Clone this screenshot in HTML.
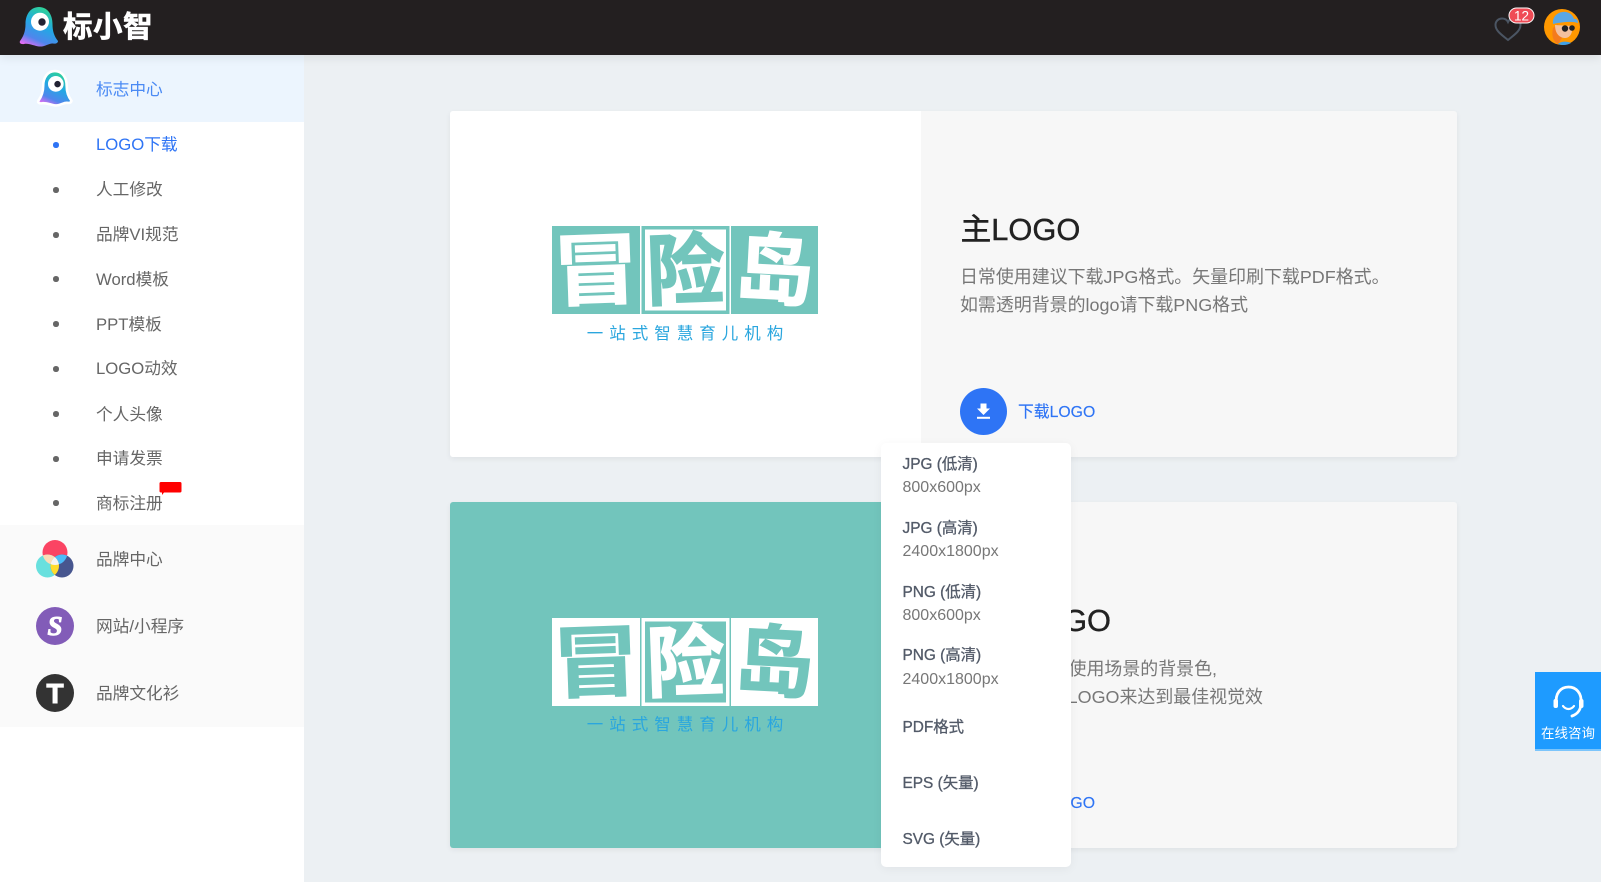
<!DOCTYPE html>
<html lang="zh-CN"><head><meta charset="utf-8"><title>标小智</title>
<style>
html,body{margin:0;padding:0;width:1601px;height:882px;overflow:hidden;background:#ecf0f3;}
body{position:relative;font-family:"Liberation Sans","Noto Sans CJK SC",sans-serif;}
.a{position:absolute;white-space:nowrap;}
.t{position:absolute;white-space:nowrap;line-height:24px;height:24px;}
.nav{left:96px;font-size:16.7px;color:#666;}
.dot{position:absolute;left:53px;width:5.5px;height:5.5px;border-radius:50%;background:#666;}
.m1{left:902.5px;font-size:15.4px;color:#525a68;-webkit-text-stroke:.3px #525a68;}
.m2{left:902.5px;font-size:16px;color:#777;}
.desc{font-size:17.95px;color:#777;}
.ttl{font-size:30.8px;color:#222;line-height:36px;height:36px;-webkit-text-stroke:.4px #222;}
.lnk{font-size:15.8px;color:#2e74f5;-webkit-text-stroke:.15px #2e74f5;}
svg{position:absolute;overflow:visible;}
</style></head><body>

<!-- header -->
<div class="a" style="left:0;top:0;width:1601px;height:55px;background:#231f20;box-shadow:0 3px 9px rgba(0,0,0,.08);z-index:3;"></div>

<!-- sidebar -->
<div class="a" style="left:0;top:55px;width:304px;height:827px;background:#fff;"></div>
<div class="a" style="left:0;top:55px;width:304px;height:67px;background:#ecf5fe;"></div>
<div class="a" style="left:0;top:525px;width:304px;height:202px;background:#fafafa;"></div>

<div class="t nav" style="top:78px;color:#4a8af4;">标志中心</div>
<div class="t nav" style="top:133px;color:#2e74f5;">LOGO下载</div>
<div class="t nav" style="top:178px;">人工修改</div>
<div class="t nav" style="top:223px;">品牌VI规范</div>
<div class="t nav" style="top:268px;">Word模板</div>
<div class="t nav" style="top:312.500px;">PPT模板</div>
<div class="t nav" style="top:357px;">LOGO动效</div>
<div class="t nav" style="top:402.500px;">个人头像</div>
<div class="t nav" style="top:447px;">申请发票</div>
<div class="t nav" style="top:492px;">商标注册</div>
<div class="t nav" style="top:548px;">品牌中心</div>
<div class="t nav" style="top:615px;">网站/小程序</div>
<div class="t nav" style="top:682px;">品牌文化衫</div>

<div class="dot" style="top:142px;background:#2e74f5;"></div>
<div class="dot" style="top:187px;"></div>
<div class="dot" style="top:232px;"></div>
<div class="dot" style="top:276px;"></div>
<div class="dot" style="top:321px;"></div>
<div class="dot" style="top:366px;"></div>
<div class="dot" style="top:411px;"></div>
<div class="dot" style="top:456px;"></div>
<div class="dot" style="top:500px;"></div>

<!-- red flag -->
<svg style="left:0;top:0;z-index:1" width="200" height="510"><path d="M161 482H180a1.500 1.500 0 0 1 1.500 1.500V491a1.500 1.500 0 0 1-1.500 1.500H164L162 495V492.500H161a1.500 1.500 0 0 1-1.500-1.500V483.500A1.500 1.500 0 0 1 161 482Z" fill="#f00"/></svg>

<!-- icons sidebar -->
<svg width="1601" height="882" style="left:0;top:0;z-index:4;pointer-events:none">
<defs>
<linearGradient id="gh" x1="0.7" y1="0" x2="0.25" y2="1"><stop offset="0" stop-color="#30d78f"/><stop offset=".45" stop-color="#22a8e4"/><stop offset=".78" stop-color="#4f86ec"/><stop offset="1" stop-color="#e56cf5"/></linearGradient>
<clipPath id="cr"><circle cx="55" cy="552.500" r="12.500"/></clipPath>
<clipPath id="ct"><circle cx="47.500" cy="566" r="11.500"/></clipPath>
<clipPath id="cn"><circle cx="62" cy="566" r="11.500"/></clipPath>
</defs>
<!-- header ghost -->
<path d="M39 7C47 7 52.500 14 52.500 24C52.500 31 54 36 58 41C58 43 56 44 53 43.500C49 43 45 47 39 46.500C34 46 29 43 24 44C21 44.500 19 43 20 41C23 37 25.500 32 25.500 24C25.500 14 31 7 39 7Z" fill="url(#gh)"/>
<circle cx="40" cy="21.700" r="9" fill="#fff"/><circle cx="42" cy="22" r="3.700" fill="#223"/>
<!-- sidebar ghost -->
<g transform="translate(21 65) scale(.87)">
<path d="M39 7C47 7 52.500 14 52.500 24C52.500 31 54 36 58 41C58 43 56 44 53 43.500C49 43 45 47 39 46.500C34 46 29 43 24 44C21 44.500 19 43 20 41C23 37 25.500 32 25.500 24C25.500 14 31 7 39 7Z" fill="url(#gh)" stroke="#fff" stroke-width="3"/>
<circle cx="40" cy="21.700" r="9" fill="#fff"/><circle cx="42" cy="22" r="3.700" fill="#223"/>
</g>
<!-- brand icon -->
<circle cx="55" cy="552.500" r="12.500" fill="#fb4463"/>
<circle cx="47.500" cy="566" r="11.500" fill="#68e0de"/>
<circle cx="62" cy="566" r="11.500" fill="#47568f"/>
<circle cx="47.500" cy="566" r="11.500" fill="#fcdcb8" clip-path="url(#cr)"/>
<circle cx="62" cy="566" r="11.500" fill="#4cbcf8" clip-path="url(#cr)"/>
<circle cx="62" cy="566" r="11.500" fill="#ffdc2c" clip-path="url(#ct)"/>
<g clip-path="url(#cr)"><circle cx="47.500" cy="566" r="11.500" fill="#f4f4f4" clip-path="url(#cn)"/></g>
<!-- S / T -->
<circle cx="55" cy="626" r="19" fill="#825cb8"/>
<circle cx="55" cy="693" r="19" fill="#333"/>
<text x="55" y="635" text-anchor="middle" font-family="Liberation Serif" font-size="27" font-weight="700" font-style="italic" fill="#fff" stroke="#fff" stroke-width="1">S</text>
<text x="55" y="703" text-anchor="middle" font-family="Liberation Sans" font-size="28" font-weight="700" fill="#fff" stroke="#fff" stroke-width="1">T</text>
<!-- heart -->
<path d="M1508 40C1502 35 1495.500 31 1495.500 25C1495.500 21 1498.500 18.500 1502 18.500C1505 18.500 1507 20 1508 22C1509 20 1511 18.500 1514 18.500C1517.500 18.500 1520.500 21 1520.500 25C1520.500 31 1514 35 1508 40Z" fill="none" stroke="#4b5563" stroke-width="2"/>
<rect x="1509" y="8" width="25" height="15" rx="7.500" fill="#ef4b55" stroke="#fff" stroke-width="1"/>
<text x="1521.500" y="20.300" text-anchor="middle" font-family="Liberation Sans" font-size="13.500" fill="#fff">12</text>
<!-- avatar -->
<circle cx="1562" cy="27" r="18" fill="#ff9800"/>
<path d="M1553 28C1551 37 1554 42 1558 44L1562 38L1558 24Z" fill="#f47b1d"/>
<path d="M1555 25C1555 34 1560 38 1565 38C1570 38 1573 33 1572 26Z" fill="#f3c19f"/>
<path d="M1553 24C1552 15 1560 11 1566 12C1571 13 1573 16 1574 19C1576 18 1578 20 1578 23C1572 21 1562 22 1553 24Z" fill="#5aa7e6"/>
<circle cx="1565" cy="28.500" r="3.200" fill="#222"/><circle cx="1572" cy="28" r="2.800" fill="#222"/>
<path d="M1558 44C1561 41 1567 41 1571 43C1567 45.500 1562 45.500 1558 44Z" fill="#3ea0e8"/>
<!-- headset -->
<path d="M1556.500 705C1554.500 693 1561 687 1568.500 687C1576 687 1582 693 1581 703C1581 709 1578 714 1572 716" fill="none" stroke="#fff" stroke-width="2.800" stroke-linecap="round"/>
<path d="M1563 706C1566 710 1571 710 1574 706" fill="none" stroke="#fff" stroke-width="2.200" stroke-linecap="round"/>
<rect x="1553.500" y="699" width="4.500" height="9" rx="2" fill="#fff"/><rect x="1579" y="699" width="4.500" height="9" rx="2" fill="#fff"/>
</svg>

<div class="a" style="left:63px;top:8px;z-index:5;font-size:29.500px;line-height:40px;font-weight:700;color:#fff;-webkit-text-stroke:.6px #fff;letter-spacing:.5px;">标小智</div>

<!-- card 1 -->
<div class="a" style="left:450px;top:111px;width:1007px;height:346px;background:#f7f7f7;border-radius:3px;box-shadow:0 2px 6px rgba(0,0,0,.06);overflow:hidden;">
<div class="a" style="left:0;top:0;width:471px;height:346px;background:#fff;"></div>
</div>
<svg width="270" height="125" style="left:550px;top:222px;">
<rect x="2" y="4" width="88" height="88" fill="#72c5bc"/><rect x="91.500" y="4" width="88" height="88" fill="#72c5bc"/><rect x="181" y="4" width="87" height="88" fill="#72c5bc"/>
<rect x="95" y="7.500" width="81" height="81" fill="#fff"/>
<g font-family="Noto Sans CJK SC" font-weight="700" font-size="78" text-anchor="middle">
<text x="46" y="76" fill="#fff" stroke="#fff" stroke-width=".8" transform="rotate(-2 46 48) translate(46 48) scale(1.12 1.02) translate(-46 -48)">冒</text>
<text x="135.500" y="76" fill="#72c5bc" stroke="#72c5bc" stroke-width="1.500" transform="rotate(-2 135 48)">险</text>
<text x="224.500" y="76" fill="#fff" stroke="#fff" stroke-width="1.500" transform="rotate(3 224 48)">岛</text>
</g>
<text x="138" y="117" text-anchor="middle" font-family="Noto Sans CJK SC" font-size="16.500" letter-spacing="6" fill="#2aa6de">一站式智慧育儿机构</text>
</svg>
<div class="t ttl" style="left:960.500px;top:212px;">主LOGO</div>
<div class="t desc" style="left:960px;top:265px;">日常使用建议下载JPG格式。矢量印刷下载PDF格式。</div>
<div class="t desc" style="left:960px;top:293px;">如需透明背景的logo请下载PNG格式</div>
<div class="a" style="left:960px;top:388px;width:47px;height:47px;border-radius:50%;background:#2e74f5;"></div>
<svg width="47" height="47" style="left:960px;top:388px;"><path d="M20.500 15.500H26.500V20.500H30L23.500 27L17 20.500H20.500Z" fill="#fff"/><rect x="17" y="28.800" width="13" height="2" fill="#fff"/></svg>
<div class="t lnk" style="left:1018px;top:401px;">下载LOGO</div>

<!-- card 2 -->
<div class="a" style="left:450px;top:502px;width:1007px;height:346px;background:#f7f7f7;border-radius:3px;box-shadow:0 2px 6px rgba(0,0,0,.06);overflow:hidden;">
<div class="a" style="left:0;top:0;width:440px;height:346px;background:#72c5bc;"></div>
</div>
<svg width="270" height="125" style="left:550px;top:614px;">
<rect x="2" y="4" width="88" height="88" fill="#fff"/><rect x="91.500" y="4" width="88" height="88" fill="#fff"/><rect x="181" y="4" width="87" height="88" fill="#fff"/>
<rect x="95" y="7.500" width="81" height="81" fill="#72c5bc"/>
<g font-family="Noto Sans CJK SC" font-weight="700" font-size="78" text-anchor="middle">
<text x="46" y="76" fill="#72c5bc" stroke="#72c5bc" stroke-width=".8" transform="rotate(-2 46 48) translate(46 48) scale(1.12 1.02) translate(-46 -48)">冒</text>
<text x="135.500" y="76" fill="#fff" stroke="#fff" stroke-width="1.500" transform="rotate(-2 135 48)">险</text>
<text x="224.500" y="76" fill="#72c5bc" stroke="#72c5bc" stroke-width="1.500" transform="rotate(3 224 48)">岛</text>
</g>
<text x="138" y="116" text-anchor="middle" font-family="Noto Sans CJK SC" font-size="16.500" letter-spacing="6" fill="#2aa6de">一站式智慧育儿机构</text>
</svg>
<div class="t ttl" style="right:490px;top:603px;">反白LOGO</div>
<div class="t desc" style="right:384px;top:656.500px;">选择符合使用场景的背景色,</div>
<div class="t desc" style="right:338px;top:684.500px;">选择对应的反白LOGO来达到最佳视觉效</div>
<div class="t lnk" style="right:506px;top:792px;">下载LOGO</div>

<!-- dropdown -->
<div class="a" style="left:880.500px;top:443px;width:190.500px;height:423.500px;background:#fff;border-radius:5px;box-shadow:0 2px 10px rgba(0,0,0,.05);"></div>
<div class="t m1" style="top:453px;">JPG (低清)</div>
<div class="t m2" style="top:476px;">800x600px</div>
<div class="t m1" style="top:517px;">JPG (高清)</div>
<div class="t m2" style="top:540px;">2400x1800px</div>
<div class="t m1" style="top:581px;">PNG (低清)</div>
<div class="t m2" style="top:604px;">800x600px</div>
<div class="t m1" style="top:644px;">PNG (高清)</div>
<div class="t m2" style="top:667.500px;">2400x1800px</div>
<div class="t m1" style="top:716px;">PDF格式</div>
<div class="t m1" style="top:772px;">EPS (矢量)</div>
<div class="t m1" style="top:828px;">SVG (矢量)</div>

<!-- consult -->
<div class="a" style="left:1535px;top:672px;width:66px;height:79px;background:#1e9bff;z-index:2;">
<div class="a" style="left:0;bottom:0;width:66px;height:2px;background:#7cc5fb;"></div>
<div class="a" style="left:0;top:53px;width:66px;text-align:center;font-size:13.500px;line-height:18px;color:#fff;">在线咨询</div>
</div>
</body></html>
